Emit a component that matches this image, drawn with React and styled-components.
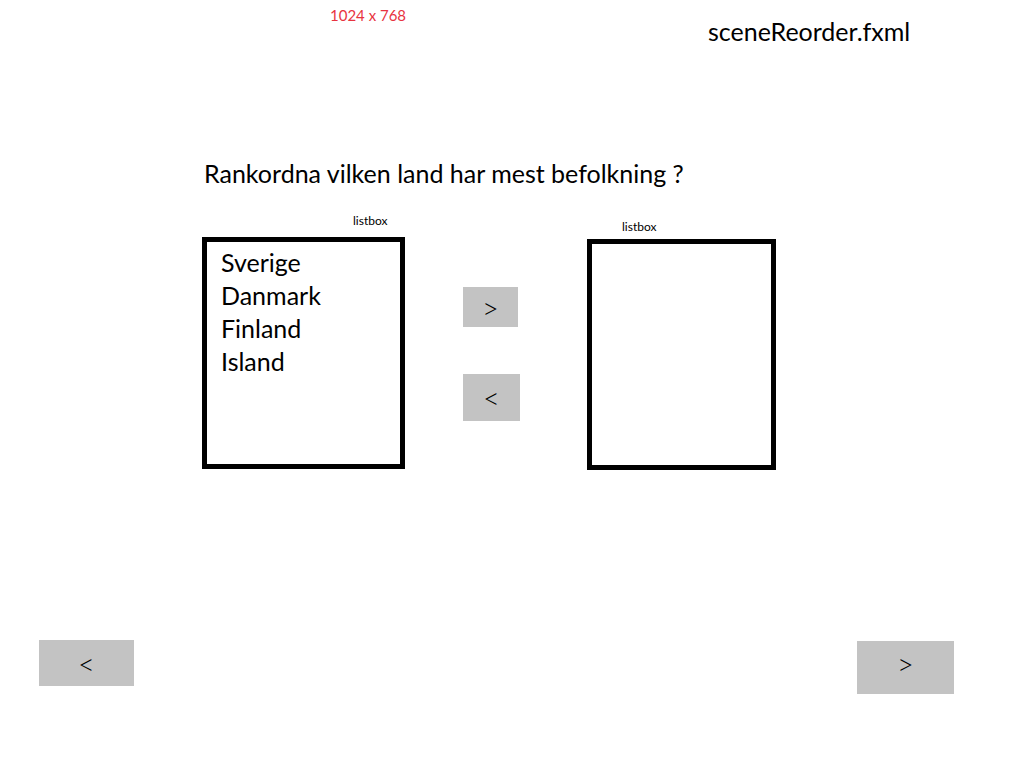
import styled, { createGlobalStyle } from 'styled-components';

const GlobalStyle = createGlobalStyle`
  html, body {
    margin: 0;
    padding: 0;
    background: #ffffff;
  }
  body {
    font-family: Lato, "Open Sans", sans-serif;
    color: #000;
  }
`;

const Page = styled.div`
  width: 1024px;
  height: 768px;
  display: flex;
  flex-direction: column;
  overflow: hidden;
`;

const Header = styled.div`
  display: grid;
  grid-template-columns: 330px 378px auto;
  align-items: start;
`;

const SizeNote = styled.div`
  grid-column: 2;
  margin-top: 6px;
  font-size: 15px;
  color: #e8333f;
`;

const FileName = styled.div`
  grid-column: 3;
  margin-top: 16px;
  font-size: 25px;
`;

const Question = styled.h1`
  margin: 113px 0 0 204px;
  font-size: 25px;
  font-weight: 400;
  line-height: 28px;
`;

const Workspace = styled.div`
  display: flex;
  align-items: flex-start;
  margin: 27px 0 0 202px;
`;

const ListColumn = styled.div`
  display: flex;
  flex-direction: column;
  margin-top: ${p => p.$top || 0}px;
  margin-right: ${p => p.$gap || 0}px;
`;

const ListLabel = styled.div`
  font-size: 12px;
  line-height: 14px;
  height: 14px;
  padding-left: ${p => p.$indent}px;
  margin-bottom: ${p => p.$space}px;
`;

const ListBox = styled.ul`
  box-sizing: border-box;
  width: ${p => p.$w}px;
  height: ${p => p.$h}px;
  border: 5px solid #000;
  margin: 0;
  padding: 4px 0 0 14px;
  list-style: none;
`;

const ListItem = styled.li`
  font-size: 25px;
  line-height: 33px;
`;

const MoveButtons = styled.div`
  display: flex;
  flex-direction: column;
  align-items: flex-start;
  gap: 47px;
  margin-top: 73px;
  margin-right: 67px;
`;

const GrayButton = styled.button`
  display: flex;
  align-items: center;
  justify-content: center;
  width: ${p => p.$w}px;
  height: ${p => p.$h}px;
  background: #c3c3c3;
  border: none;
  padding: 0 0 ${p => p.$lift || 0}px 0;
  font-family: Lato, "Open Sans", sans-serif;
  font-size: 29px;
  font-weight: 300;
  line-height: 1;
  color: #000;
  cursor: pointer;
`;

const Navigation = styled.div`
  margin-top: auto;
  margin-bottom: 74px;
  display: flex;
  justify-content: space-between;
  align-items: flex-start;
  padding: 0 70px 0 39px;
`;

const NavRight = styled.div`
  padding-top: 1px;
`;

const countries = ['Sverige', 'Danmark', 'Finland', 'Island'];

export default function App() {
  return (
    <>
      <GlobalStyle />
      <Page>
        <Header>
          <SizeNote>1024 x 768</SizeNote>
          <FileName>sceneReorder.fxml</FileName>
        </Header>

        <Question>Rankordna vilken land har mest befolkning ?</Question>

        <Workspace>
          <ListColumn $gap={58}>
            <ListLabel $indent={151} $space={9}>listbox</ListLabel>
            <ListBox $w={203} $h={232}>
              {countries.map(c => (
                <ListItem key={c}>{c}</ListItem>
              ))}
            </ListBox>
          </ListColumn>

          <MoveButtons>
            <GrayButton $w={55} $h={40}>&gt;</GrayButton>
            <GrayButton $w={57} $h={47}>&lt;</GrayButton>
          </MoveButtons>

          <ListColumn $top={6}>
            <ListLabel $indent={35} $space={5}>listbox</ListLabel>
            <ListBox $w={189} $h={231} />
          </ListColumn>
        </Workspace>

        <Navigation>
          <GrayButton $w={95} $h={46}>&lt;</GrayButton>
          <NavRight>
            <GrayButton $w={97} $h={53} $lift={8}>&gt;</GrayButton>
          </NavRight>
        </Navigation>
      </Page>
    </>
  );
}
